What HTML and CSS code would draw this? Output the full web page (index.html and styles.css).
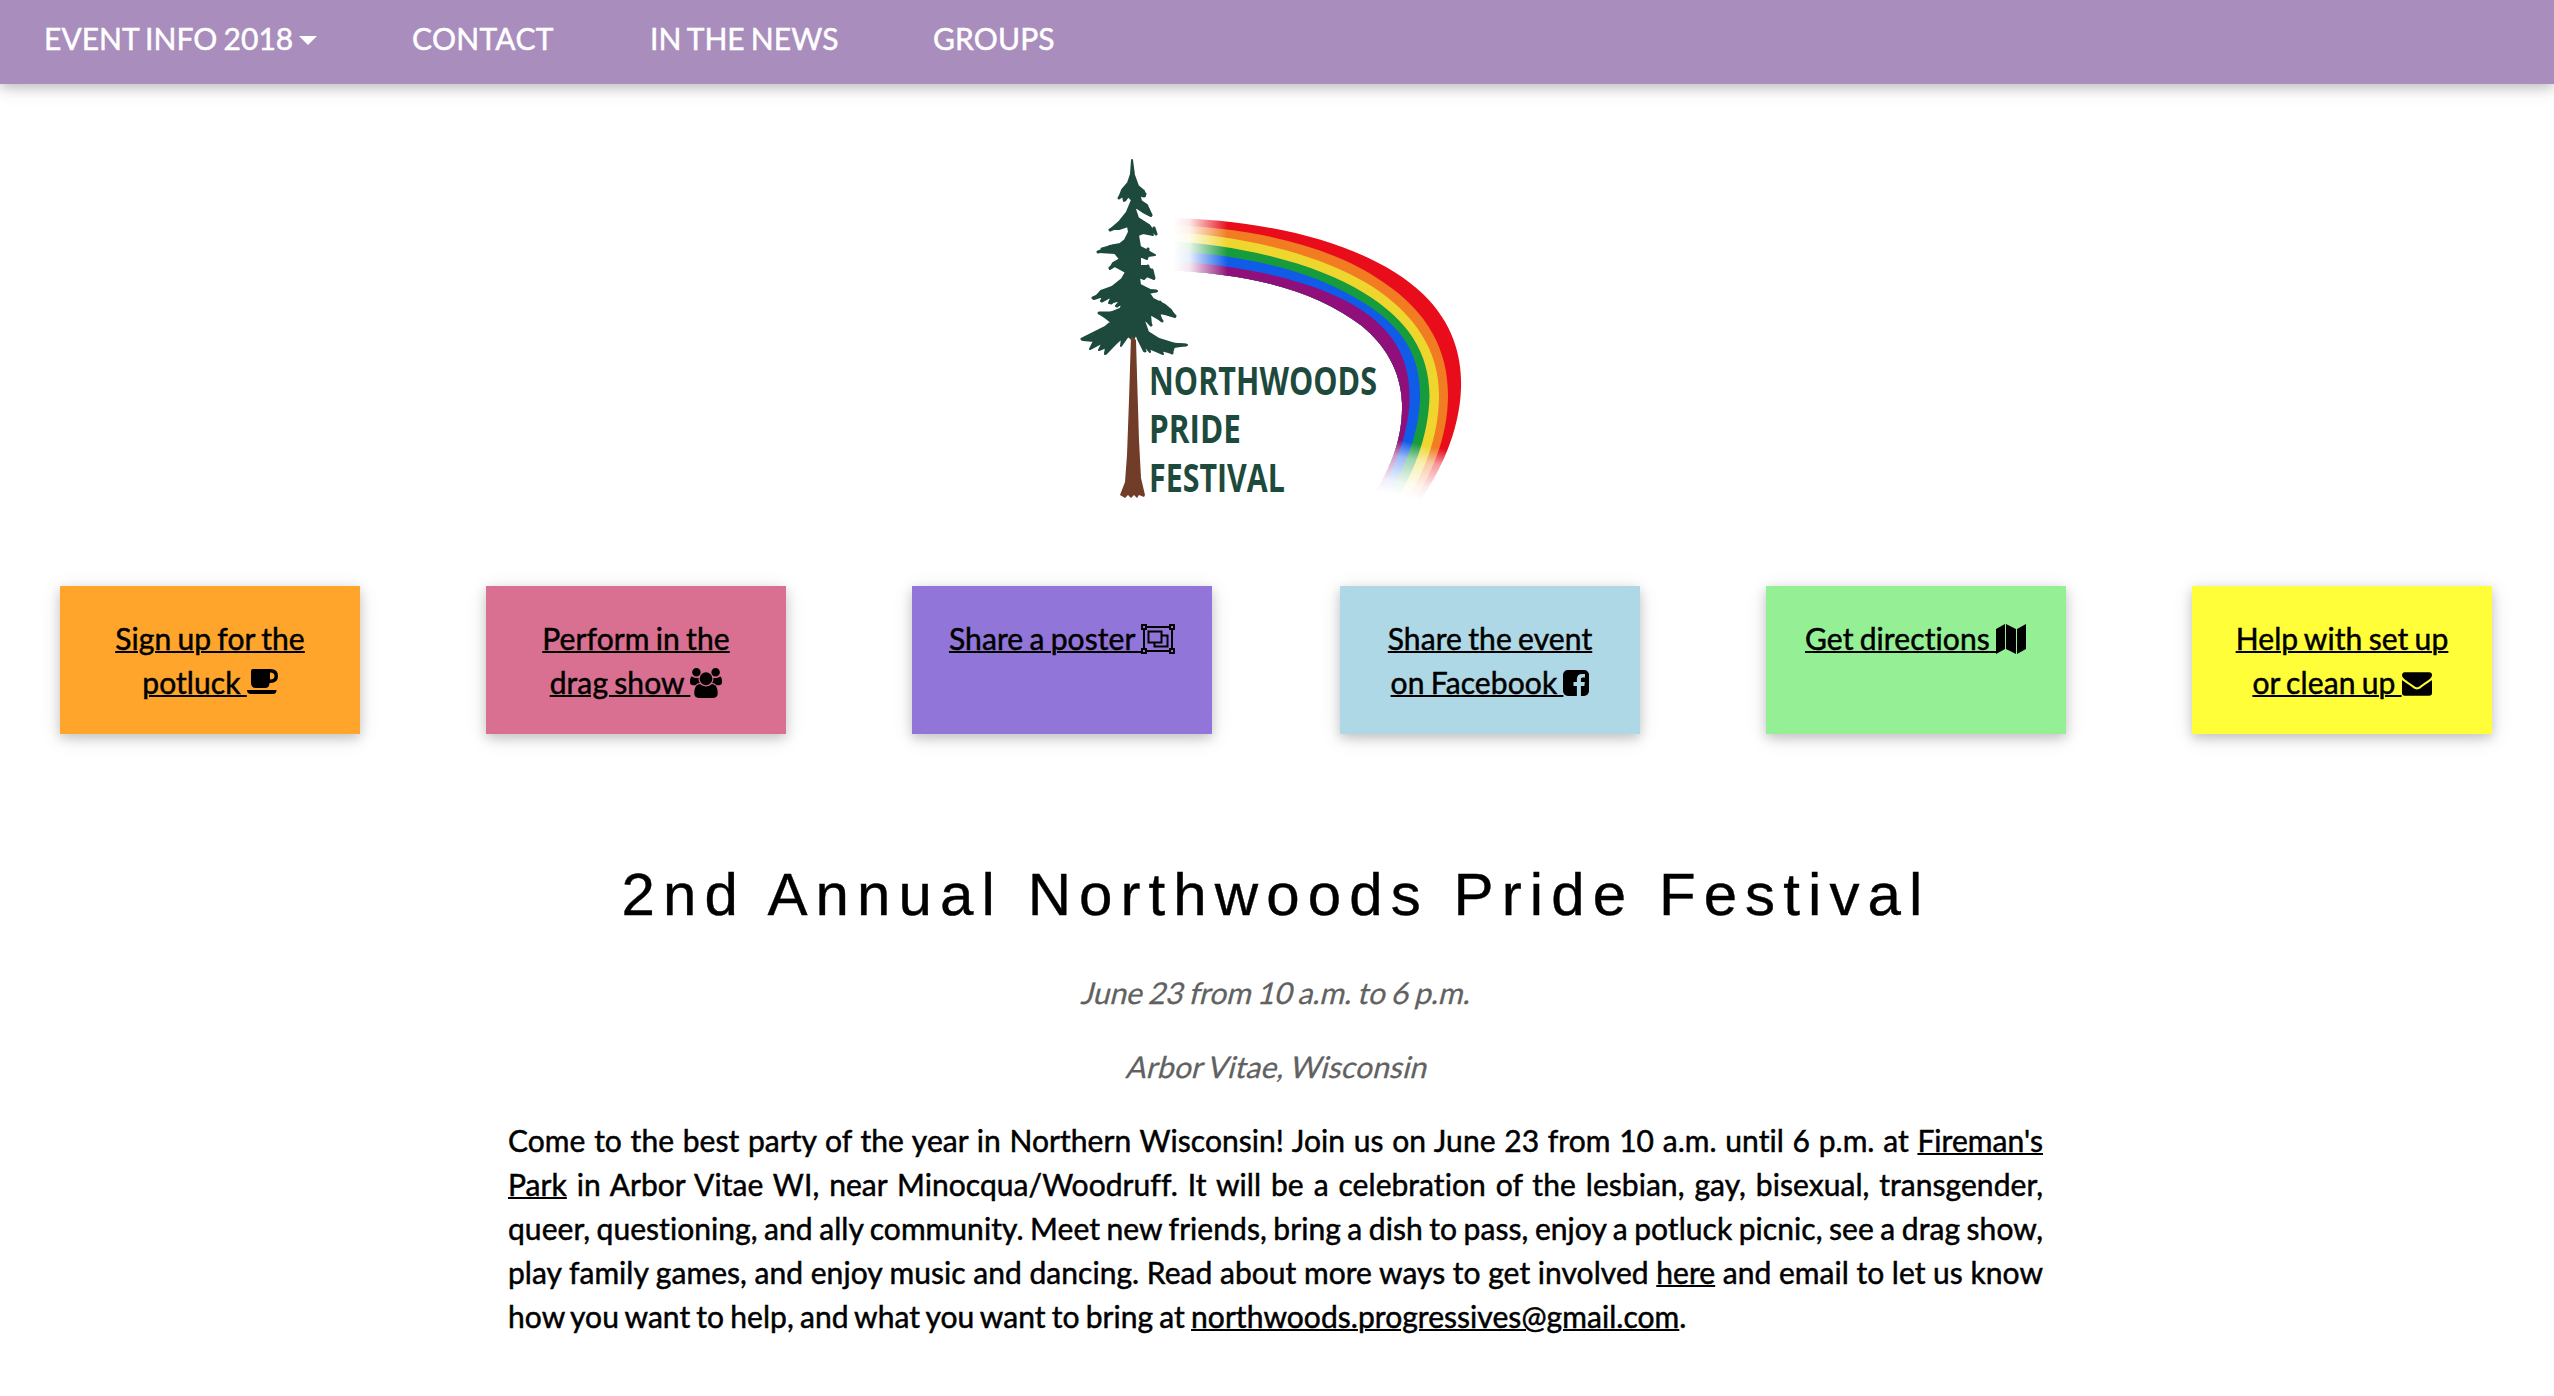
FILE: index.html
```html
<!DOCTYPE html>
<html lang="en">
<head>
<meta charset="utf-8">
<title>Northwoods Pride Festival</title>
<link rel="stylesheet" href="styles.css">
</head>
<body>
<nav class="topnav">
  <a class="nav-info">EVENT INFO 2018<svg class="caret" viewBox="0 0 18 9"><path d="M0 0h18L9 9z"/></svg></a>
  <a class="nav-contact">CONTACT</a>
  <a class="nav-news">IN THE NEWS</a>
  <a class="nav-groups">GROUPS</a>
</nav>
<header class="logo">
<svg class="logo-art" viewBox="1060 140 420 380" role="img">
  <defs>
    <linearGradient id="fadeLeft" gradientUnits="userSpaceOnUse" x1="1173" y1="0" x2="1228" y2="0"><stop offset="0" stop-color="#fff"/><stop offset=".3" stop-color="#fff" stop-opacity=".9"/><stop offset="1" stop-color="#fff" stop-opacity="0"/></linearGradient>
    <linearGradient id="fadeDown" gradientUnits="userSpaceOnUse" x1="1405" y1="441" x2="1394" y2="495"><stop offset="0" stop-color="#fff" stop-opacity="0"/><stop offset=".3" stop-color="#fff" stop-opacity=".58"/><stop offset=".75" stop-color="#fff" stop-opacity=".92"/><stop offset="1" stop-color="#fff"/></linearGradient>
  </defs>
  <path fill="#e90d1b" d="M1165 218C1270 219 1372 245 1423 294C1455 325 1462 360 1461 388C1460 430 1440 475 1415 507L1367 507C1390 470 1403 441 1402 403C1401 371 1385 345 1362 326C1315 291 1255 274 1165 270Z"/>
  <path fill="#f17c22" d="M1165 225C1250 227 1330 245 1383 282C1428 312 1448 350 1448 395C1448 438 1431 476 1410 507L1367 507C1390 470 1403 441 1402 403C1401 371 1385 345 1362 326C1315 291 1255 274 1165 270Z"/>
  <path fill="#efd62f" d="M1165 232C1245 235 1325 256 1373 287C1415 315 1439 350 1439 395C1439 438 1423 476 1402 507L1367 507C1390 470 1403 441 1402 403C1401 371 1385 345 1362 326C1315 291 1255 274 1165 270Z"/>
  <path fill="#169b3d" d="M1165 241C1240 244 1320 265 1364 293C1408 320 1429 352 1429.500 395C1429 437 1412 477 1392 507L1367 507C1390 470 1403 441 1402 403C1401 371 1385 345 1362 326C1315 291 1255 274 1165 270Z"/>
  <path fill="#105be8" d="M1165 251C1240 254 1306 269 1354 297C1398 322 1420 350 1420 395C1420 438 1400 477 1382 507L1367 507C1390 470 1403 441 1402 403C1401 371 1385 345 1362 326C1315 291 1255 274 1165 270Z"/>
  <path fill="#910f7a" d="M1165 261C1240 264 1307 280 1350 303C1389 325 1409 353 1409.500 395C1410 437 1391 475 1372 507L1367 507C1390 470 1403 441 1402 403C1401 371 1385 345 1362 326C1315 291 1255 274 1165 270Z"/>
  <path fill="url(#fadeLeft)" d="M1160 210h68v70h-68z"/>
  <path fill="url(#fadeDown)" d="M1350 425h125v90h-125z"/>
  <path fill="#1d4a3d" stroke="#1d4a3d" stroke-width="2" stroke-linejoin="round" d="M1132 160L1134 175L1138 186L1144 191L1145 196L1139 193L1141 201L1147 205L1149 210L1151 216L1143 212L1134 206L1138 218L1149 225L1156 234L1150 230L1153 235L1143 233L1138 235L1140 247L1148 251L1155 255L1148 256L1147 259L1140 256L1140 266L1147 266L1152 271L1154 279L1147 276L1144 279L1139 277L1140 285L1150 290L1157 291L1149 293L1153 299L1165 305L1171 310L1175 317L1165 314L1159 313L1162 321L1150 314L1151 325L1143 318L1148 332L1159 339L1175 344L1187 345L1174 347L1172 353L1161 350L1163 354L1149 348L1150 352L1145 346L1144 351L1138 339L1136 334L1133 340L1128 336L1121 346L1122 338L1115 344L1105 354L1106 347L1099 350L1103 342L1090 349L1094 341L1083 340L1093 336L1104 328L1111 322L1106 318L1100 314L1110 313L1120 309L1123 304L1116 306L1121 300L1109 303L1112 296L1101 301L1103 296L1094 299L1101 291L1112 287L1122 279L1126 272L1115 266L1110 269L1113 263L1120 259L1115 253L1099 252L1110 246L1120 244L1125 240L1129 232L1128 226L1119 229L1111 229L1119 222L1127 212L1132 200L1128 196L1124 201L1123 196L1119 198L1122 190L1128 183L1131 174Z"/>
  <path fill="none" stroke="#1d4a3d" stroke-width="3" stroke-linecap="round" d="M1102 249L1114 246M1098 252L1107 249M1110 268L1124 257M1110 230L1124 224M1119 198L1126 188M1125 200L1129 194M1137 194L1144 196M1137 188L1145 194M1145 205L1144 210M1148 209L1151 215M1149 226L1150 231M1154 228L1156 234M1148 249L1147 256M1148 266L1147 275M1152 270L1154 278M1093 298L1112 290M1102 301L1118 292M1111 303L1121 295M1117 306L1124 298M1099 313L1113 313M1082 339L1104 328M1093 345L1111 335M1102 348L1117 336M1106 353L1123 335M1156 291L1143 291M1151 325L1142 314M1162 321L1148 308M1168 314L1160 302M1175 316L1166 307M1137 333L1145 351M1148 337L1161 351M1159 340L1172 353M1170 344L1186 345"/>
  <path fill="#723d28" d="M1131 336L1136 340L1137 375L1139 440L1141 478L1145 495L1144 497L1139 495L1137 498L1134 495L1131 498L1128 495L1125 498L1120 495L1125 482L1127 455L1129 400Z"/>
  <g class="logo-text"><text x="1149" y="394.500" textLength="228" lengthAdjust="spacingAndGlyphs">NORTHWOODS</text><text x="1149" y="443" textLength="92" lengthAdjust="spacingAndGlyphs">PRIDE</text><text x="1149" y="491.500" textLength="136" lengthAdjust="spacingAndGlyphs">FESTIVAL</text></g>
</svg>
</header>
<section class="cards">
  <div class="card orange"><a>Sign up for the potluck <svg class="icon" style="width:31px" viewBox="0 0 31 30"><path d="M4 3Q4 1 6 1H23.500Q31 1 31 8Q31 15 23.500 15H22.500Q22.500 20 18 20H9Q4 20 4 15ZM23 4.500V11.500Q27.500 11.500 27.500 8Q27.500 4.500 23 4.500ZM0 22H29.500Q29.500 26 26 26H4Q0 26 0 22Z"/></svg></a></div>
  <div class="card rose"><a>Perform in the drag show <svg class="icon" style="width:32px" viewBox="0 0 1920 1792"><path d="M593 896q-162 5-265 128H194q-82 0-138-40.500T0 865q0-353 124-353 6 0 43.500 21t97.500 42.500T384 597q67 0 133-23-5 37-5 66 0 139 81 256zm1071 637q0 120-73 189.500t-194 69.500H523q-121 0-194-69.500T256 1533q0-53 3.500-103.500t14-109T300 1212t43-97.500 62-81 85.500-53.500T602 960q10 0 43 21.500t73 48 107 48 135 21.500 135-21.500 107-48 73-48 43-21.500q61 0 111.500 20t85.500 53.500 62 81 43 97.500 26.500 108.500 14 109 3.500 103.500zM640 256q0 106-75 181t-181 75-181-75-75-181 75-181T384 0t181 75 75 181zm704 384q0 159-112.500 271.500T960 1024 688.500 911.500 576 640t112.500-271.500T960 256t271.500 112.500T1344 640zm576 225q0 78-56 118.500t-138 40.500h-134q-103-123-265-128 81-117 81-256 0-29-5-66 66 23 133 23 59 0 119-21.500t97.500-42.500 43.500-21q124 0 124 353zm-128-609q0 106-75 181t-181 75-181-75-75-181 75-181 181-75 181 75 75 181z"/></svg></a></div>
  <div class="card purple"><a>Share a poster <svg class="icon" style="width:34px" viewBox="0 0 34 30"><path fill="none" stroke="#000" stroke-width="2" d="M5 3H29M31 5V25M29 27H5M3 25V5M1 1h4v4H1zM29 1h4v4h-4zM1 25h4v4H1zM29 25h4v4h-4zM7.500 7.500H20.500V18.500H7.500zM20.500 11.500H26.500V22.500H13.500V18.500"/></svg></a></div>
  <div class="card blue"><a>Share the event on Facebook <svg class="icon" style="width:26px" viewBox="0 128 1536 1536"><path d="M1248 128q119 0 203.500 84.500T1536 416v960q0 119-84.500 203.500T1248 1664h-188v-595h199l30-232h-229V689q0-56 23.500-84t91.500-28l122-1V369q-63-9-178-9-136 0-217.500 80T820 666v171H620v232h200v595H288q-119 0-203.500-84.500T0 1376V416q0-119 84.500-203.500T288 128h960z"/></svg></a></div>
  <div class="card green"><a>Get directions <svg class="icon" style="width:31px" viewBox="0 0 31 30"><path d="M0 5L9 0V25L0 30ZM10 0L20 5V30L10 25ZM21 5L30 0V25L21 30Z"/></svg></a></div>
  <div class="card yellow"><a>Help with set up or clean up <svg class="icon" style="width:30px" viewBox="0 0 1792 1792"><path d="M1792 710v794q0 66-47 113t-113 47H160q-66 0-113-47T0 1504V710q44 49 101 87 362 246 497 345 57 42 92.500 65.500t94.500 48 110 24.500h2q51 0 110-24.500t94.500-48 92.500-65.500q170-123 498-345 57-39 100-87zm0-294q0 79-49 151t-122 123q-376 261-468 325-10 7-42.500 30.500t-54 38-52 32.500-57.500 27-50 9h-2q-23 0-50-9t-57.500-27-52-32.500-54-38T639 1015q-91-64-262-182.500T172 690q-62-42-117-115.500T0 438q0-78 41.500-130T160 256h1472q65 0 112.500 47t47.500 113z"/></svg></a></div>
</section>
<main class="content">
  <h1>2nd Annual Northwoods Pride Festival</h1>
  <p class="when date"><span>June 23 from 10 a.m. to 6 p.m.</span></p>
  <p class="when place"><span>Arbor Vitae, Wisconsin</span></p>
  <p class="intro">Come to the best party of the year in Northern Wisconsin! Join us on June 23 from 10 a.m. until 6 p.m. at <a>Fireman's Park</a> in Arbor Vitae WI, near Minocqua/Woodruff. It will be a celebration of the lesbian, gay, bisexual, transgender, queer, questioning, and ally community. Meet new friends, bring a dish to pass, enjoy a potluck picnic, see a drag show, play family games, and enjoy music and dancing. Read about more ways to get involved <a>here</a> and email to let us know how you want to help, and what you want to bring at <a>northwoods.progressives@gmail.com</a>.</p>
</main>
</body>
</html>
```
FILE: styles.css
```css
* { box-sizing: border-box; }
html, body { margin: 0; height: 1396px; overflow: hidden; }
body { background: #fff; color: #000; font: 30px/44px Lato, sans-serif; font-variant-ligatures: none; letter-spacing: .05px; word-spacing: -1.6px; -webkit-text-stroke: .5px; }
.topnav { height: 84px; background: #a98dbc; color: #fff; display: flex; align-items: flex-start; padding: 16px 0 0 44px; box-shadow: 0 4px 10px rgba(0,0,0,.16), 0 4px 20px rgba(0,0,0,.12); white-space: nowrap; }
.nav-info { width: 368px; }
.nav-contact { width: 238px; letter-spacing: .3px; }
.nav-news { width: 283px; }
.nav-groups { letter-spacing: .15px; }
.caret { width: 18px; height: 9px; fill: #fff; margin-left: 6px; vertical-align: 5px; }
.logo { height: 502px; padding-top: 56px; display: flex; justify-content: center; }
.logo-art { width: 420px; height: 380px; margin-left: -14px; }
.logo-text { font-family: "Open Sans", sans-serif; font-weight: 700; font-size: 40px; fill: #1d4a3d; -webkit-text-stroke: 0; }
.cards { display: grid; grid-template-columns: 426px 426px 428px 426px 426px 300px; padding-left: 60px; }
.card { width: 300px; height: 148px; padding: 30px 32px; text-align: center; letter-spacing: .1px; box-shadow: 0 4px 10px rgba(0,0,0,.16), 0 4px 20px rgba(0,0,0,.12); }
.card a, .intro a { text-decoration: underline; text-decoration-thickness: 2px; }
.icon { height: 30px; vertical-align: -4px; overflow: visible; -webkit-text-stroke: 0; }
.orange { background: #ffa52b; }
.rose { background: #d97091; }
.purple { background: #9275d8; }
.blue { background: #aed8e5; }
.green { background: #94ef95; }
.yellow { background: #fffe38; }
.content { width: 1535px; margin-left: 508px; padding-top: 116px; }
h1 { margin: 0 0 30px; padding-left: 1px; font: 400 60px/90px "Liberation Sans", sans-serif; letter-spacing: 8.1px; word-spacing: 0; text-align: center; white-space: nowrap; -webkit-text-stroke: .4px; }
.when { margin: 0 0 30px; padding-left: 5px; text-align: center; color: #616161; -webkit-text-stroke: .25px; }
.when span { display: inline-block; transform: skewX(-14deg); }
.date { letter-spacing: -.05px; }
.place { letter-spacing: .15px; }
.intro { margin: 0; text-align: justify; }
```
